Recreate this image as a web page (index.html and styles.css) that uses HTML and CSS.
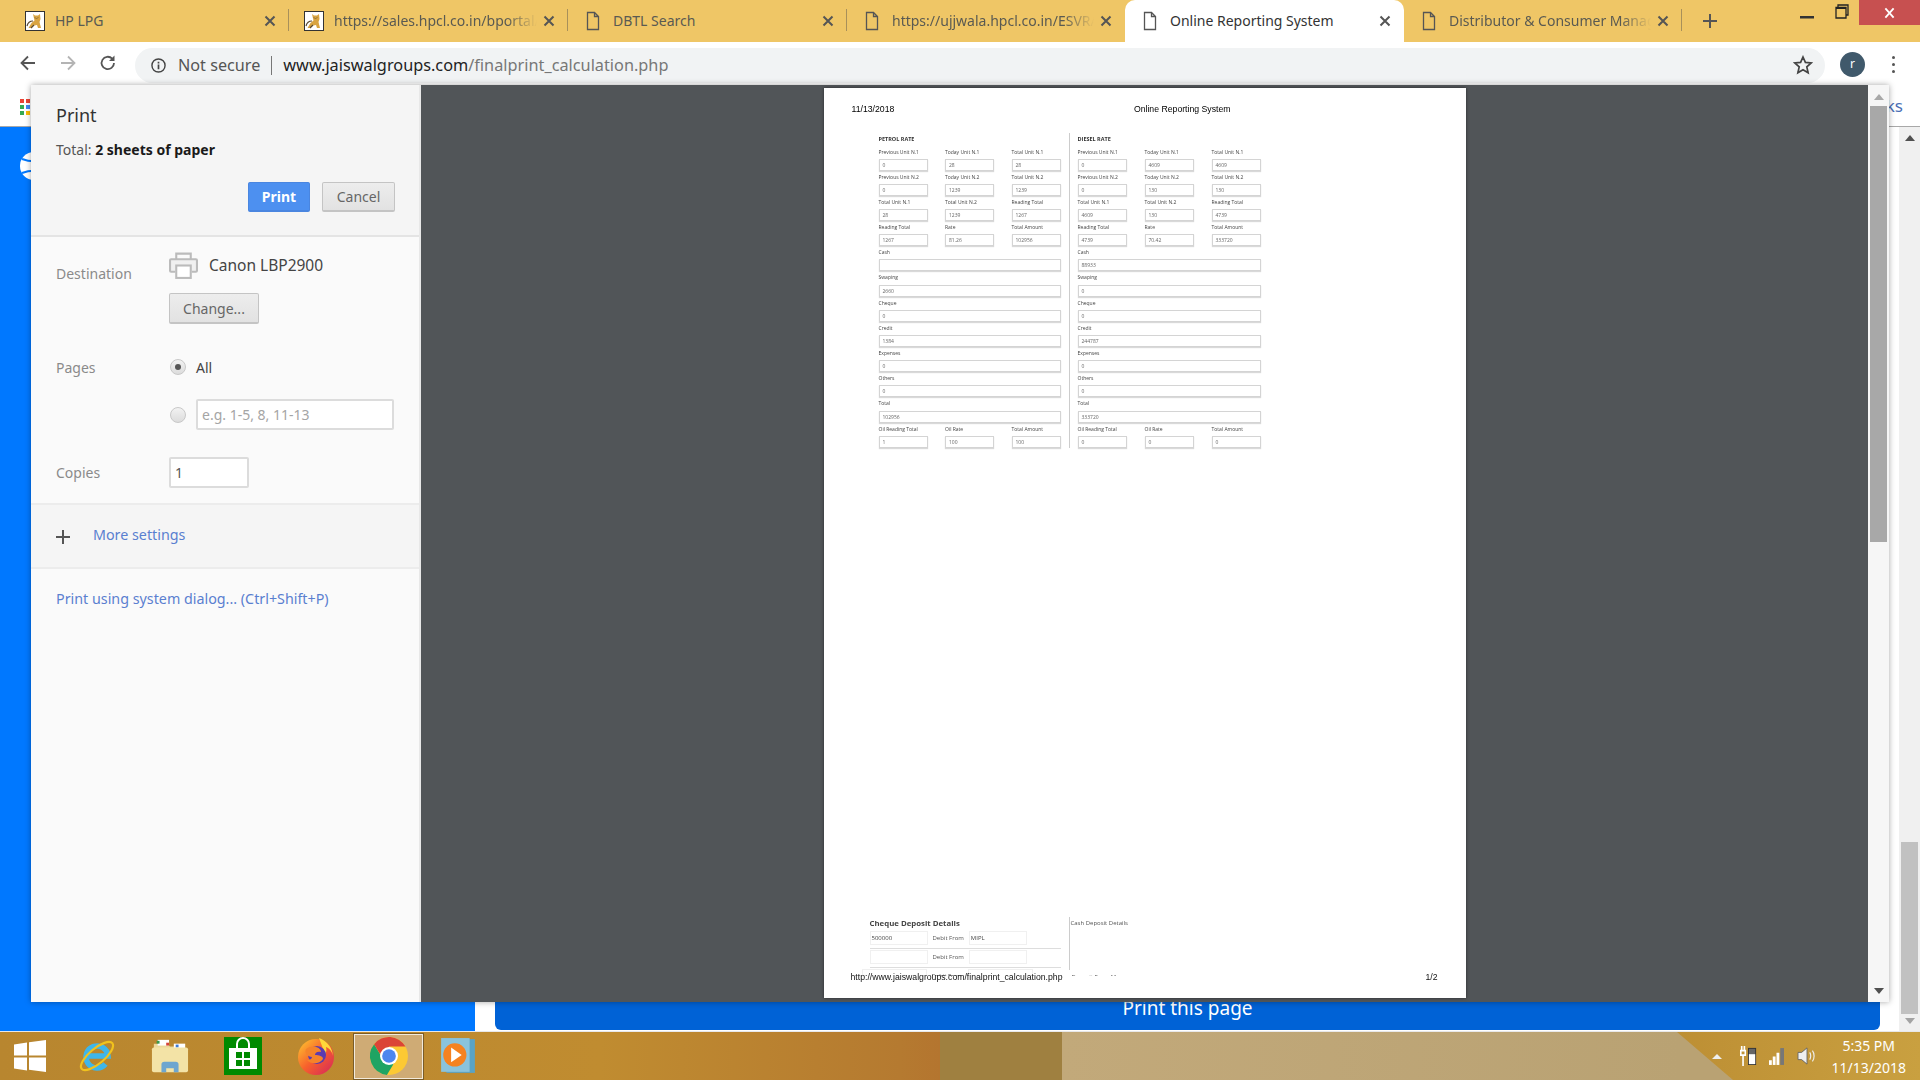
FILE: index.html
```html
<!DOCTYPE html>
<html lang="en">
<head>
    <meta charset="UTF-8">
    <title>Online Reporting System</title>
    <link rel="stylesheet" href="styles.css">
</head>
<body>

    <svg class="defs" width="0" height="0">
        <symbol id="cat" viewBox="0 0 20 20">
            <rect x=".5" y=".5" width="19" height="19" fill="#fff" stroke="#333"/>
            <path d="M8 3l2 1.500h3L15 3l.5 5-1 3 1.500 6h-3l-1-3-3 .5-3.500 2.500H3.500l3-5 3-2.500z" fill="#d9a441"/>
            <path d="M2 15c1-4 3-5 6-5M9 14l-3 3" fill="none" stroke="#5a4a30" stroke-width="1.200"/>
            <path d="M10 6.500l1 1M13 6.500l-1 1" stroke="#5a4a30"/>
        </symbol>
        <symbol id="doc" viewBox="0 0 20 20">
            <path d="M4.500 1.500h7l4 4v13h-11zM11.500 1.500v4h4" fill="none" stroke="#555" stroke-width="1.300"/>
        </symbol>
        <symbol id="cross" viewBox="0 0 12 12">
            <path d="M1.500 1.500l9 9M10.500 1.500l-9 9" fill="none" stroke="currentColor" stroke-width="2"/>
        </symbol>
    </svg>

    <div class="tabstrip">
        <div class="tab sep">
            <svg class="favicon"><use href="#cat"/></svg>
            <span class="tab-title">HP LPG</span>
            <svg class="tab-close"><use href="#cross"/></svg>
        </div>
        <div class="tab sep">
            <svg class="favicon"><use href="#cat"/></svg>
            <span class="tab-title fade">https://sales.hpcl.co.in/bportal/</span>
            <svg class="tab-close"><use href="#cross"/></svg>
        </div>
        <div class="tab sep">
            <svg class="favicon"><use href="#doc"/></svg>
            <span class="tab-title">DBTL Search</span>
            <svg class="tab-close"><use href="#cross"/></svg>
        </div>
        <div class="tab narrow">
            <svg class="favicon"><use href="#doc"/></svg>
            <span class="tab-title fade">https://ujjwala.hpcl.co.in/ESVR/</span>
            <svg class="tab-close"><use href="#cross"/></svg>
        </div>
        <div class="tab active">
            <svg class="favicon"><use href="#doc"/></svg>
            <span class="tab-title">Online Reporting System</span>
            <svg class="tab-close"><use href="#cross"/></svg>
        </div>
        <div class="tab sep narrow">
            <svg class="favicon"><use href="#doc"/></svg>
            <span class="tab-title fade">Distributor &amp; Consumer Management</span>
            <svg class="tab-close"><use href="#cross"/></svg>
        </div>
        <svg class="new-tab" viewBox="0 0 16 16"><path d="M8 1v14M1 8h14" stroke="#555" stroke-width="2"/></svg>
        <div class="win-buttons">
            <svg class="win-min" viewBox="0 0 14 3"><rect width="14" height="2.500" fill="#333"/></svg>
            <svg class="win-restore" viewBox="0 0 14 15"><path d="M3 3V1h10v10h-2M1 3.500h10V14H1z" fill="#efc666" stroke="#222" stroke-width="1.300"/><rect x="1" y="3" width="10" height="2" fill="#222"/></svg>
            <div class="win-close"><svg viewBox="0 0 12 12"><path d="M1.500 1l9 10M10.500 1l-9 10" stroke="#fff" stroke-width="2"/></svg></div>
        </div>
    </div>

    <div class="toolbar">
        <svg class="nav-icon" viewBox="0 0 18 18"><path d="M16 9H3M9 2.500L2.500 9 9 15.500" fill="none" stroke="#555" stroke-width="1.800"/></svg>
        <svg class="nav-icon" viewBox="0 0 18 18"><path d="M2 9h13M9 2.500L15.500 9 9 15.500" fill="none" stroke="#b4b4b4" stroke-width="1.800"/></svg>
        <svg class="nav-icon" viewBox="0 0 18 18"><path d="M15 9a6.200 6.200 0 1 1-1.800-4.400" fill="none" stroke="#555" stroke-width="1.800"/><path d="M15.500 1.500v5.500H10z" fill="#555"/></svg>
        <div class="omnibox">
            <svg class="info-icon" viewBox="0 0 16 16"><circle cx="8" cy="8" r="7" fill="none" stroke="#444" stroke-width="1.500"/><path d="M8 7v5M8 4v1.800" stroke="#444" stroke-width="1.800"/></svg>
            <span class="not-secure">Not secure</span>
            <span class="omni-sep"></span>
            <span class="url">www.jaiswalgroups.com<span class="url-path">/finalprint_calculation.php</span></span>
            <svg class="star" viewBox="0 0 20 20"><path d="M10 2l2.400 5.400 5.800.6-4.400 3.900 1.300 5.800L10 14.700l-5.100 3 1.300-5.800L1.800 8l5.800-.6z" fill="none" stroke="#444" stroke-width="1.700"/></svg>
        </div>
        <div class="avatar">r</div>
        <div class="menu-dots"><i></i><i></i><i></i></div>
    </div>

    <div class="main">
        <div class="bookmarks">
            <div class="apps">
                <i class="r"></i><i class="r"></i><i class="b"></i>
                <i class="g"></i><i class="b"></i><i class="y"></i>
                <i class="g"></i><i class="y"></i><i class="y"></i>
            </div>
            <span class="bm-tail">ks</span>
        </div>
        <div class="site">
            <div class="site-side">
                <svg class="site-logo" viewBox="0 0 30 30"><circle cx="15" cy="15" r="14" fill="#fff"/><path d="M15 1v28M3 8c8 3 16 3 24 0M3 22c8-3 16-3 24 0" fill="none" stroke="#0078ff" stroke-width="2"/></svg>
            </div>
            <div class="site-content">
                <div class="print-page">Print this page</div>
            </div>
            <div class="site-scroll">
                <span class="arrow-up"></span>
                <span class="site-thumb"></span>
                <span class="arrow-down"></span>
            </div>
        </div>

        <div class="print-dialog">
            <div class="sidebar">
                <div class="side-head">
                    <h1>Print</h1>
                    <p class="total">Total: <b>2 sheets of paper</b></p>
                    <div class="head-buttons">
                        <button class="btn primary">Print</button>
                        <button class="btn cancel">Cancel</button>
                    </div>
                </div>
                <div class="settings">
                    <div class="setting dest">
                        <div class="set-label">Destination</div>
                        <div>
                            <div class="printer">
                                <svg class="printer-icon" viewBox="0 0 28 26"><path d="M7 7V1.500h14V7" fill="none" stroke="#bbb" stroke-width="2"/><path d="M6 19H2a1 1 0 0 1-1-1V8a1 1 0 0 1 1-1h24a1 1 0 0 1 1 1v10a1 1 0 0 1-1 1h-4" fill="#f0f0f0" stroke="#bbb" stroke-width="2"/><rect x="7" y="13" width="14" height="12" fill="#fff" stroke="#bbb" stroke-width="2"/></svg>
                                <span>Canon LBP2900</span>
                            </div>
                            <button class="btn change">Change...</button>
                        </div>
                    </div>
                    <div class="setting pages">
                        <div class="set-label">Pages</div>
                        <span class="radio checked"></span>
                        <span class="all-label">All</span>
                    </div>
                    <div class="setting range">
                        <div class="set-label"></div>
                        <span class="radio"></span>
                        <input class="text-input range-input" placeholder="e.g. 1-5, 8, 11-13">
                    </div>
                    <div class="setting copies">
                        <div class="set-label">Copies</div>
                        <input class="text-input copies-input" value="1">
                    </div>
                </div>
                <div class="more">
                    <svg class="more-plus" viewBox="0 0 14 14"><path d="M7 0v14M0 7h14" stroke="#555" stroke-width="2"/></svg>
                    <a class="link">More settings</a>
                </div>
                <div class="system-dialog"><a class="link">Print using system dialog... (Ctrl+Shift+P)</a></div>
            </div>

            <div class="preview">
                <div class="preview-pane">
                    <div class="sheet">
                        <div class="sheet-head">
                            <span>11/13/2018</span>
                            <span>Online Reporting System</span>
                        </div>
                        <div class="rates">
                            <div class="rate-col">
                                <h4>PETROL RATE</h4>
                                <div class="row3">
                                    <div class="fld"><label>Previous Unit N.1</label><div class="box">0</div></div>
                                    <div class="fld"><label>Today Unit N.1</label><div class="box">28</div></div>
                                    <div class="fld"><label>Total Unit N.1</label><div class="box">28</div></div>
                                </div>
                                <div class="row3">
                                    <div class="fld"><label>Previous Unit N.2</label><div class="box">0</div></div>
                                    <div class="fld"><label>Today Unit N.2</label><div class="box">1239</div></div>
                                    <div class="fld"><label>Total Unit N.2</label><div class="box">1239</div></div>
                                </div>
                                <div class="row3">
                                    <div class="fld"><label>Total Unit N.1</label><div class="box">28</div></div>
                                    <div class="fld"><label>Total Unit N.2</label><div class="box">1239</div></div>
                                    <div class="fld"><label>Reading Total</label><div class="box">1267</div></div>
                                </div>
                                <div class="row3">
                                    <div class="fld"><label>Reading Total</label><div class="box">1267</div></div>
                                    <div class="fld"><label>Rate</label><div class="box">81.26</div></div>
                                    <div class="fld"><label>Total Amount</label><div class="box">102956</div></div>
                                </div>
                                <div class="fld"><label>Cash</label><div class="box"></div></div>
                                <div class="fld"><label>Swaping</label><div class="box">2660</div></div>
                                <div class="fld"><label>Cheque</label><div class="box">0</div></div>
                                <div class="fld"><label>Credit</label><div class="box">1384</div></div>
                                <div class="fld"><label>Expenses</label><div class="box">0</div></div>
                                <div class="fld"><label>Others</label><div class="box">0</div></div>
                                <div class="fld"><label>Total</label><div class="box">102956</div></div>
                                <div class="row3">
                                    <div class="fld"><label>Oil Reading Total</label><div class="box">1</div></div>
                                    <div class="fld"><label>Oil Rate</label><div class="box">100</div></div>
                                    <div class="fld"><label>Total Amount</label><div class="box">100</div></div>
                                </div>
                            </div>
                            <div class="rate-col second">
                                <h4>DIESEL RATE</h4>
                                <div class="row3">
                                    <div class="fld"><label>Previous Unit N.1</label><div class="box">0</div></div>
                                    <div class="fld"><label>Today Unit N.1</label><div class="box">4609</div></div>
                                    <div class="fld"><label>Total Unit N.1</label><div class="box">4609</div></div>
                                </div>
                                <div class="row3">
                                    <div class="fld"><label>Previous Unit N.2</label><div class="box">0</div></div>
                                    <div class="fld"><label>Today Unit N.2</label><div class="box">130</div></div>
                                    <div class="fld"><label>Total Unit N.2</label><div class="box">130</div></div>
                                </div>
                                <div class="row3">
                                    <div class="fld"><label>Total Unit N.1</label><div class="box">4609</div></div>
                                    <div class="fld"><label>Total Unit N.2</label><div class="box">130</div></div>
                                    <div class="fld"><label>Reading Total</label><div class="box">4739</div></div>
                                </div>
                                <div class="row3">
                                    <div class="fld"><label>Reading Total</label><div class="box">4739</div></div>
                                    <div class="fld"><label>Rate</label><div class="box">70.42</div></div>
                                    <div class="fld"><label>Total Amount</label><div class="box">333720</div></div>
                                </div>
                                <div class="fld"><label>Cash</label><div class="box">88933</div></div>
                                <div class="fld"><label>Swaping</label><div class="box">0</div></div>
                                <div class="fld"><label>Cheque</label><div class="box">0</div></div>
                                <div class="fld"><label>Credit</label><div class="box">244787</div></div>
                                <div class="fld"><label>Expenses</label><div class="box">0</div></div>
                                <div class="fld"><label>Others</label><div class="box">0</div></div>
                                <div class="fld"><label>Total</label><div class="box">333720</div></div>
                                <div class="row3">
                                    <div class="fld"><label>Oil Reading Total</label><div class="box">0</div></div>
                                    <div class="fld"><label>Oil Rate</label><div class="box">0</div></div>
                                    <div class="fld"><label>Total Amount</label><div class="box">0</div></div>
                                </div>
                            </div>
                        </div>
                        <div class="deposits">
                            <div class="cheques">
                                <h5>Cheque Deposit Details</h5>
                                <div class="dep-row"><span class="dep-box">500000</span><span>Debit From</span><span class="dep-box">MIPL</span></div>
                                <div class="dep-row"><span class="dep-box"></span><span>Debit From</span><span class="dep-box"></span></div>
                                <div class="dep-row last"><span class="dep-box"></span><span>Debit From</span><span class="dep-box"></span></div>
                            </div>
                            <div class="cash">
                                <div class="cash-head">Cash Deposit Details</div>
                                <div class="cash-manager">Deposit From Manager</div>
                            </div>
                        </div>
                        <div class="sheet-foot">
                            <span>http://www.jaiswalgroups.com/finalprint_calculation.php</span>
                            <span>1/2</span>
                        </div>
                    </div>
                </div>
                <div class="preview-scroll">
                    <span class="arrow-up light"></span>
                    <span class="preview-thumb"></span>
                    <span class="arrow-down dark"></span>
                </div>
            </div>
        </div>
    </div>

    <div class="taskbar">
        <svg class="win-logo" viewBox="0 0 32 32"><path d="M0 4.500l13-2v13H0zM15 2.200L32 0v15.500H15zM0 17.500h13v13l-13-2zM15 17.500h17V32l-17-2.300z" fill="#fff"/></svg>
        <div class="task"><svg viewBox="0 0 38 38"><path d="M10 19h20a11 11 0 1 0-2.500 8" fill="none" stroke="#3fb6ea" stroke-width="5.500"/><ellipse cx="19" cy="19" rx="20" ry="7.500" transform="rotate(-40 19 19)" fill="none" stroke="#f1c21d" stroke-width="2.200"/></svg></div>
        <div class="task"><svg viewBox="0 0 40 38"><path d="M3 6h14l3 3h15v8H3z" fill="#ebd89a"/><rect x="7" y="2" width="12" height="6" fill="#fff"/><rect x="24" y="6" width="12" height="5" fill="#fff"/><rect x="6" y="3" width="3" height="3" fill="#3a9a4a"/><rect x="16" y="5" width="3" height="3" fill="#d6453a"/><rect x="26" y="7" width="3" height="3" fill="#3a7ad6"/><rect x="1" y="10" width="38" height="26" rx="2" fill="#f3e3a6"/><path d="M11 36v-8a3 3 0 0 1 3-3h12a3 3 0 0 1 3 3v8h-5v-4h-8v4z" fill="#6ea6cf"/></svg></div>
        <div class="task"><svg viewBox="0 0 38 38"><rect width="38" height="38" fill="#008a00"/><path d="M5 11h28v21H5z" fill="#fff"/><path d="M13 11V7a6 6 0 0 1 12 0v4" fill="none" stroke="#fff" stroke-width="2"/><path d="M12 15h6v6h-6zM20 15h6v6h-6zM12 23h6v6h-6zM20 23h6v6h-6z" fill="#008a00"/></svg></div>
        <div class="task"><svg viewBox="0 0 38 38"><defs><linearGradient id="fx" x1="0" y1="0" x2="1" y2="1"><stop offset="0" stop-color="#ffcb2e"/><stop offset=".5" stop-color="#f7602c"/><stop offset="1" stop-color="#d4235e"/></linearGradient></defs><circle cx="19" cy="20" r="18" fill="url(#fx)"/><path d="M22 1c8 3 14 10 14 19 0-5-4-9-7-10 1 3 0 6-1 7z" fill="#ffd83a"/><circle cx="20" cy="18" r="9" fill="#5b3ab0"/><path d="M9 12c6-5 15-2 15 3-4-1-6 1-6 3 4 0 8 1 8 4-3 5-12 6-16 1 3 0 5-1 5-3-4 0-8-4-6-8z" fill="#f5832a"/></svg></div>
        <div class="task current"><svg viewBox="0 0 36 36"><circle cx="18" cy="18" r="18" fill="#fcc934"/><path d="M18 18l4 8-6 9.900A18 18 0 0 1 3.900 6.800L10 17z" fill="#1fa463"/><path d="M18 18L9.300 15.700 3.900 6.800A18 18 0 0 1 33.600 9H18z" fill="#db4437"/><circle cx="18" cy="18" r="8.500" fill="#fff"/><circle cx="18" cy="18" r="6.500" fill="#4d86ee"/></svg></div>
        <div class="task last"><svg viewBox="0 0 34 36"><rect x="6" y="2" width="27" height="32" fill="#5aa3c4"/><rect x="1" y="1" width="27" height="32" fill="#8ac3dc"/><circle cx="14" cy="17" r="11" fill="#f58220"/><path d="M10.500 10l10 7-10 7z" fill="#fff"/></svg></div>
        <div class="tray">
            <span class="tray-up"></span>
            <svg class="tray-power" viewBox="0 0 20 24"><path d="M3 1v5M6 1v5M2 6h5v5H2zM4.500 11v12" fill="none" stroke="#fff" stroke-width="1.800"/><rect x="10" y="3" width="9" height="19" fill="#333"/><rect x="11" y="4" width="7" height="17" fill="#666"/><rect x="11" y="10" width="7" height="11" fill="#fff"/></svg>
            <svg class="tray-signal" viewBox="0 0 16 18"><rect y="13" width="3" height="5" fill="#fff"/><rect x="4" y="9" width="3" height="9" fill="#fff"/><rect x="8" y="5" width="3" height="13" fill="#fff"/><rect x="12" y="0" width="4" height="18" fill="#777"/></svg>
            <svg class="tray-sound" viewBox="0 0 22 20"><path d="M1 6h4l6-5v18l-6-5H1z" fill="#eee" stroke="#666"/><path d="M14 6c1.500 2 1.500 6 0 8M17 4c2.500 3 2.500 9 0 12" fill="none" stroke="#eee" stroke-width="1.300"/></svg>
            <div class="clock"><span>5:35 PM</span><span>11/13/2018</span></div>
        </div>
    </div>

</body>
</html>
```

FILE: styles.css
```css
/* page frame */
html, body {
    margin: 0;
    padding: 0;
    height: 100%;
}
body {
    width: 1920px;
    height: 1080px;
    overflow: hidden;
    display: flex;
    flex-direction: column;
    font-family: "Noto Sans", "Open Sans", sans-serif;
    color: #333;
    background: #fff;
}
.defs {
    position: absolute;
}

/* tabs */
.tabstrip {
    height: 42px;
    flex: none;
    display: flex;
    padding-left: 10px;
    background: #efc666;
}
.tab {
    position: relative;
    width: 279px;
    box-sizing: border-box;
    display: flex;
    align-items: center;
    padding: 0 13px 0 15px;
    font-size: 14px;
    color: #5a5a52;
}
.tab.narrow {
    width: 278px;
}
.tab.sep::after {
    content: "";
    position: absolute;
    right: 0;
    top: 9px;
    bottom: 11px;
    width: 1px;
    background: #a8905a;
}
.tab.active {
    width: 279px;
    height: 42px;
    background: #fff;
    color: #333;
    border-radius: 10px 10px 0 0;
}
.favicon {
    width: 20px;
    height: 20px;
    flex: none;
    margin-right: 10px;
}
.tab-title {
    flex: 1;
    white-space: nowrap;
    overflow: hidden;
    padding-bottom: 2px;
}
.tab-title.fade {
    -webkit-mask-image: linear-gradient(90deg, #000 85%, transparent 100%);
    mask-image: linear-gradient(90deg, #000 85%, transparent 100%);
}
.tab-close {
    width: 12px;
    height: 12px;
    flex: none;
    margin-left: 6px;
    color: #555;
}
.new-tab {
    width: 16px;
    height: 16px;
    margin: 13px 0 0 20px;
}
.win-buttons {
    margin-left: auto;
    display: flex;
    align-items: flex-start;
}
.win-min {
    width: 14px;
    height: 3px;
    margin: 16px 21px 0 0;
}
.win-restore {
    width: 14px;
    height: 15px;
    margin: 4px 10px 0 0;
}
.win-close {
    width: 61px;
    height: 25px;
    background: #c75050;
    display: flex;
    align-items: center;
    justify-content: center;
}
.win-close svg {
    width: 11px;
    height: 12px;
}

/* address bar */
.toolbar {
    height: 42px;
    flex: none;
    display: flex;
    align-items: center;
    background: #fff;
    padding: 0 18px 0 19px;
    box-sizing: border-box;
}
.nav-icon {
    width: 18px;
    height: 18px;
    margin-right: 22px;
    flex: none;
}
.nav-icon:nth-child(3) {
    margin-right: 18px;
}
.omnibox {
    width: 1690px;
    height: 35px;
    margin-top: 4px;
    border-radius: 18px;
    background: #f1f3f4;
    display: flex;
    align-items: center;
    box-sizing: border-box;
    padding: 0 12px 0 16px;
}
.info-icon {
    width: 15px;
    height: 15px;
    flex: none;
}
.not-secure {
    margin-left: 12px;
    color: #555;
    font-size: 16.200px;
}
.omni-sep {
    width: 1px;
    height: 19px;
    margin: 0 11px;
    background: #777;
}
.url {
    color: #222;
    font-size: 16.300px;
}
.url-path {
    color: #777;
}
.star {
    width: 20px;
    height: 20px;
    margin-left: auto;
}
.avatar {
    width: 25px;
    height: 25px;
    margin: 2px 0 0 15px;
    border-radius: 50%;
    background: #40596b;
    color: #fff;
    font-size: 12px;
    text-align: center;
    line-height: 24px;
}
.menu-dots {
    margin-left: 27px;
    display: flex;
    flex-direction: column;
    gap: 4px;
    margin-top: 2px;
}
.menu-dots i {
    width: 3px;
    height: 3px;
    background: #555;
    border-radius: 50%;
}

/* page behind the dialog */
.main {
    flex: 1;
    position: relative;
    display: flex;
    flex-direction: column;
    min-height: 0;
}
.bookmarks {
    height: 42px;
    flex: none;
    border-bottom: 1px solid #a8a8a8;
    display: flex;
    align-items: center;
    padding-left: 20px;
}
.apps {
    display: grid;
    grid-template-columns: repeat(3, 4px);
    gap: 2px;
    margin-top: 4px;
}
.apps i {
    height: 4px;
}
.apps .r { background: #ea4335; }
.apps .g { background: #34a853; }
.apps .b { background: #4285f4; }
.apps .y { background: #fbbc05; }
.bm-tail {
    margin-left: auto;
    margin-right: 17px;
    font-size: 17px;
    color: #4a6fb5;
}
.site {
    flex: 1;
    display: flex;
    min-height: 0;
}
.site-side {
    width: 475px;
    background: #0078ff;
    flex: none;
    position: relative;
    padding: 24px 0 0 19px;
    box-sizing: border-box;
}
.site-logo {
    width: 30px;
    height: 30px;
    display: block;
}
.site-content {
    flex: 1;
    background: #fff;
    display: flex;
    align-items: flex-end;
    padding: 0 19px 1px 20px;
}
.print-page {
    width: 100%;
    height: 42px;
    background: #0062d6;
    border-radius: 0 0 6px 6px;
    color: #fff;
    font-size: 19px;
    line-height: 41px;
    text-align: center;
}
.site-scroll {
    width: 21px;
    flex: none;
    background: #f0f0f0;
    display: flex;
    flex-direction: column;
    align-items: center;
    padding: 8px 0 7px;
    box-sizing: border-box;
}
.site-thumb {
    width: 17px;
    height: 172px;
    margin-top: auto;
    margin-bottom: 4px;
    background: #c1c1c1;
}
.arrow-up, .arrow-down {
    width: 0;
    height: 0;
    border-left: 5px solid transparent;
    border-right: 5px solid transparent;
}
.arrow-up {
    border-bottom: 6px solid #505050;
}
.arrow-down {
    border-top: 6px solid #a3a3a3;
}

/* print dialog */
.print-dialog {
    position: absolute;
    left: 31px;
    top: 1px;
    width: 1858px;
    height: 917px;
    display: flex;
    box-shadow: 0 0 6px rgba(0, 0, 0, 0.35);
}
.sidebar {
    width: 388px;
    flex: none;
    background: #fafafa;
    border-right: 2px solid #e8e8e8;
    display: flex;
    flex-direction: column;
}
.side-head {
    height: 152px;
    flex: none;
    box-sizing: border-box;
    padding: 16px 24px 0 25px;
    background: #f5f5f5;
    border-bottom: 2px solid #e4e4e4;
}
.side-head h1 {
    margin: 0;
    font-size: 18px;
    font-weight: 400;
    line-height: 28px;
    color: #333;
}
.total {
    margin: 11px 0 0;
    font-size: 14px;
    line-height: 20px;
    color: #555;
}
.total b {
    color: #1a1a1a;
}
.head-buttons {
    display: flex;
    justify-content: flex-end;
    gap: 12px;
    margin-top: 22px;
}
.btn {
    height: 30px;
    box-sizing: border-box;
    border: 1px solid #c4c4c4;
    border-bottom-width: 2px;
    border-radius: 2px;
    background: linear-gradient(#ededed, #e2e2e2);
    color: #666;
    font-family: inherit;
    font-size: 14px;
    padding: 0;
}
.btn.primary {
    width: 62px;
    background: #4d90f0;
    border-color: #4a86e0;
    color: #fff;
    font-weight: 700;
}
.btn.cancel {
    width: 73px;
}
.btn.change {
    width: 90px;
    height: 31px;
    display: block;
    margin-top: 14px;
}

.settings {
    flex: none;
    height: 266px;
    padding-left: 25px;
    box-sizing: border-box;
    font-size: 14px;
}
.setting {
    display: flex;
    align-items: center;
}
.set-label {
    width: 113px;
    flex: none;
    color: #8a8a8a;
}
.dest {
    align-items: flex-start;
    padding-top: 14px;
}
.dest .set-label {
    margin-top: 13px;
}
.printer {
    display: flex;
    align-items: center;
    height: 28px;
    font-size: 15.500px;
    color: #444;
    gap: 11px;
}
.printer-icon {
    width: 29px;
    height: 27px;
}
.pages {
    height: 24px;
    margin-top: 31px;
}
.all-label {
    margin-left: 10px;
    color: #444;
}
.radio {
    width: 16px;
    height: 16px;
    margin-left: 1px;
    border-radius: 50%;
    border: 1px solid #c8c8c8;
    box-sizing: border-box;
    background: linear-gradient(#f2f2f2, #dcdcdc);
    display: flex;
    align-items: center;
    justify-content: center;
    flex: none;
}
.radio.checked::before {
    content: "";
    width: 6px;
    height: 6px;
    border-radius: 50%;
    background: #555;
}
.range {
    margin-top: 20px;
}
.text-input {
    box-sizing: border-box;
    height: 31px;
    border: 2px solid #dcdcdc;
    border-radius: 2px;
    background: #fff;
    font-family: inherit;
    font-size: 14px;
    color: #555;
    padding: 0 4px;
    outline: none;
}
.text-input::placeholder {
    color: #a5a5a5;
}
.range-input {
    width: 198px;
    margin-left: 10px;
}
.copies {
    margin-top: 27px;
}
.copies-input {
    width: 80px;
}
.more {
    height: 66px;
    flex: none;
    box-sizing: border-box;
    background: #f5f5f5;
    border-top: 2px solid #ececec;
    border-bottom: 2px solid #ececec;
    display: flex;
    align-items: center;
    padding: 0 0 4px 25px;
}
.more-plus {
    width: 14px;
    height: 14px;
    margin: 6px 23px 0 0;
}
.link {
    color: #5a7fd0;
    font-size: 14.300px;
}
.system-dialog {
    padding: 18px 0 0 25px;
}

/* preview */
.preview {
    flex: 1;
    display: flex;
    min-width: 0;
}
.preview-pane {
    flex: 1;
    background: #515558;
    display: flex;
    justify-content: center;
    padding-top: 3px;
    min-width: 0;
}
.preview-scroll {
    width: 21px;
    flex: none;
    background: #f6f6f6;
    display: flex;
    flex-direction: column;
    align-items: center;
    padding: 9px 0 8px;
    box-sizing: border-box;
}
.arrow-up.light {
    border-bottom-color: #a8a8a8;
}
.arrow-down.dark {
    margin-top: auto;
    border-top-color: #505050;
}
.preview-thumb {
    width: 17px;
    height: 436px;
    margin-top: 6px;
    background: #a8a8a8;
}

/* printed sheet */
.sheet {
    position: relative;
    width: 642px;
    height: 910px;
    background: #fff;
    box-shadow: 0 0 3px rgba(0, 0, 0, 0.5);
    filter: blur(0.45px);
    display: flex;
    flex-direction: column;
    overflow: hidden;
}
.sheet-head {
    display: flex;
    justify-content: space-between;
    padding: 16px 235px 0 28px;
    height: 45px;
    flex: none;
    box-sizing: border-box;
    font-family: "Liberation Sans", Arial, sans-serif;
    font-size: 8.700px;
    line-height: 11px;
    color: #000;
}
.rates {
    display: flex;
    padding-left: 55px;
}
.rate-col {
    width: 182px;
    padding-right: 8px;
    display: flex;
    flex-direction: column;
    font-family: "Open Sans", sans-serif;
}
.rate-col.second {
    border-left: 1px solid #ccc;
    padding: 0 0 0 8px;
    width: 183px;
}
.rate-col h4 {
    margin: 0;
    height: 12.500px;
    font-size: 5.500px;
    line-height: 12px;
    font-weight: 700;
    color: #333;
}
.row3 {
    display: grid;
    grid-template-columns: repeat(3, 49px);
    justify-content: space-between;
}
.fld label {
    display: block;
    height: 13.200px;
    font-size: 5px;
    line-height: 13px;
    color: #444;
}
.box {
    height: 12px;
    box-sizing: border-box;
    border: 1px solid #d4d4d4;
    box-shadow: 0 1px 1px rgba(0, 0, 0, 0.15);
    font-size: 5px;
    line-height: 10px;
    padding-left: 3px;
    color: #666;
}
.deposits {
    margin-top: auto;
    margin-bottom: 22px;
    height: 59px;
    flex: none;
    overflow: hidden;
    display: flex;
    padding-left: 46px;
    font-family: "Open Sans", sans-serif;
    color: #555;
}
.cheques {
    width: 191px;
    margin-right: 8px;
    font-size: 6px;
}
.cheques h5 {
    margin: 0;
    height: 13px;
    font-size: 7.800px;
    line-height: 12px;
    color: #444;
}
.dep-row {
    display: flex;
    align-items: flex-start;
    gap: 5px;
    height: 19px;
    padding-top: 1px;
    border-bottom: 1px solid #ddd;
    box-sizing: border-box;
    line-height: 14px;
}
.dep-row.last {
    margin-left: -8px;
}
.dep-box {
    width: 58px;
    height: 14px;
    box-sizing: border-box;
    border: 1px solid #f0f0f0;
    font-size: 6px;
    line-height: 12px;
    color: #444;
    padding-left: 1px;
}
.dep-row.last .dep-box {
    width: 65px;
}
.cash {
    font-size: 6px;
    line-height: 12px;
}
.cash-head {
    height: 53px;
    box-sizing: border-box;
    border-left: 1px solid #ccc;
    padding-left: 1px;
}
.cash-manager {
    margin-top: 1px;
    padding-left: 3px;
    white-space: nowrap;
}
.sheet-foot {
    position: absolute;
    left: 27px;
    right: 28px;
    bottom: 15px;
    display: flex;
    justify-content: space-between;
    font-family: "Liberation Sans", Arial, sans-serif;
    font-size: 8.700px;
    line-height: 11px;
    color: #111;
}

/* taskbar */
.taskbar {
    position: relative;
    height: 49px;
    flex: none;
    display: flex;
    align-items: center;
    background: linear-gradient(90deg, #b8862f 0, #c08c30 600px, #b57a30 900px, #b4752f 940px, #9f8040 940px, #9f8040 1062px, #c2a97a 1062px, #b9a273 1680px, #b9a273 1740px);
    border-top: 1px solid #e8e8e8;
    box-sizing: border-box;
}
.taskbar::before {
    content: "";
    position: absolute;
    left: 1677px;
    right: 0;
    top: 0;
    bottom: 0;
    background: linear-gradient(90deg, #bd8f34, #c9a040);
    clip-path: polygon(0 0, 100% 0, 100% 100%, 56px 100%);
}
.win-logo {
    position: relative;
    width: 32px;
    height: 32px;
    margin: 0 15px 0 14px;
    flex: none;
}
.task {
    position: relative;
    width: 71px;
    height: 47px;
    flex: none;
    margin-right: 2px;
    box-sizing: border-box;
    display: flex;
    align-items: center;
    justify-content: center;
}
.task svg {
    width: 38px;
    height: 38px;
    overflow: visible;
}
.task.last {
    margin-left: -4px;
}
.task.current {
    background: #cfab75;
    border: 2px solid #f2eadb;
    outline: 1px solid #7a5c28;
    outline-offset: -1px;
}
.tray {
    position: relative;
    margin-left: auto;
    display: flex;
    align-items: center;
    padding-right: 14px;
    color: #fff;
}
.tray-up {
    width: 0;
    height: 0;
    border-left: 5px solid transparent;
    border-right: 5px solid transparent;
    border-bottom: 5px solid #eee;
    margin-right: 17px;
}
.tray-power {
    width: 18px;
    height: 22px;
    margin-right: 12px;
}
.tray-signal {
    width: 15px;
    height: 17px;
    margin-right: 13px;
}
.tray-sound {
    width: 20px;
    height: 18px;
    margin-right: 15px;
}
.clock {
    display: flex;
    flex-direction: column;
    align-items: center;
    font-size: 14px;
    line-height: 22px;
    padding-top: 2px;
}
```
